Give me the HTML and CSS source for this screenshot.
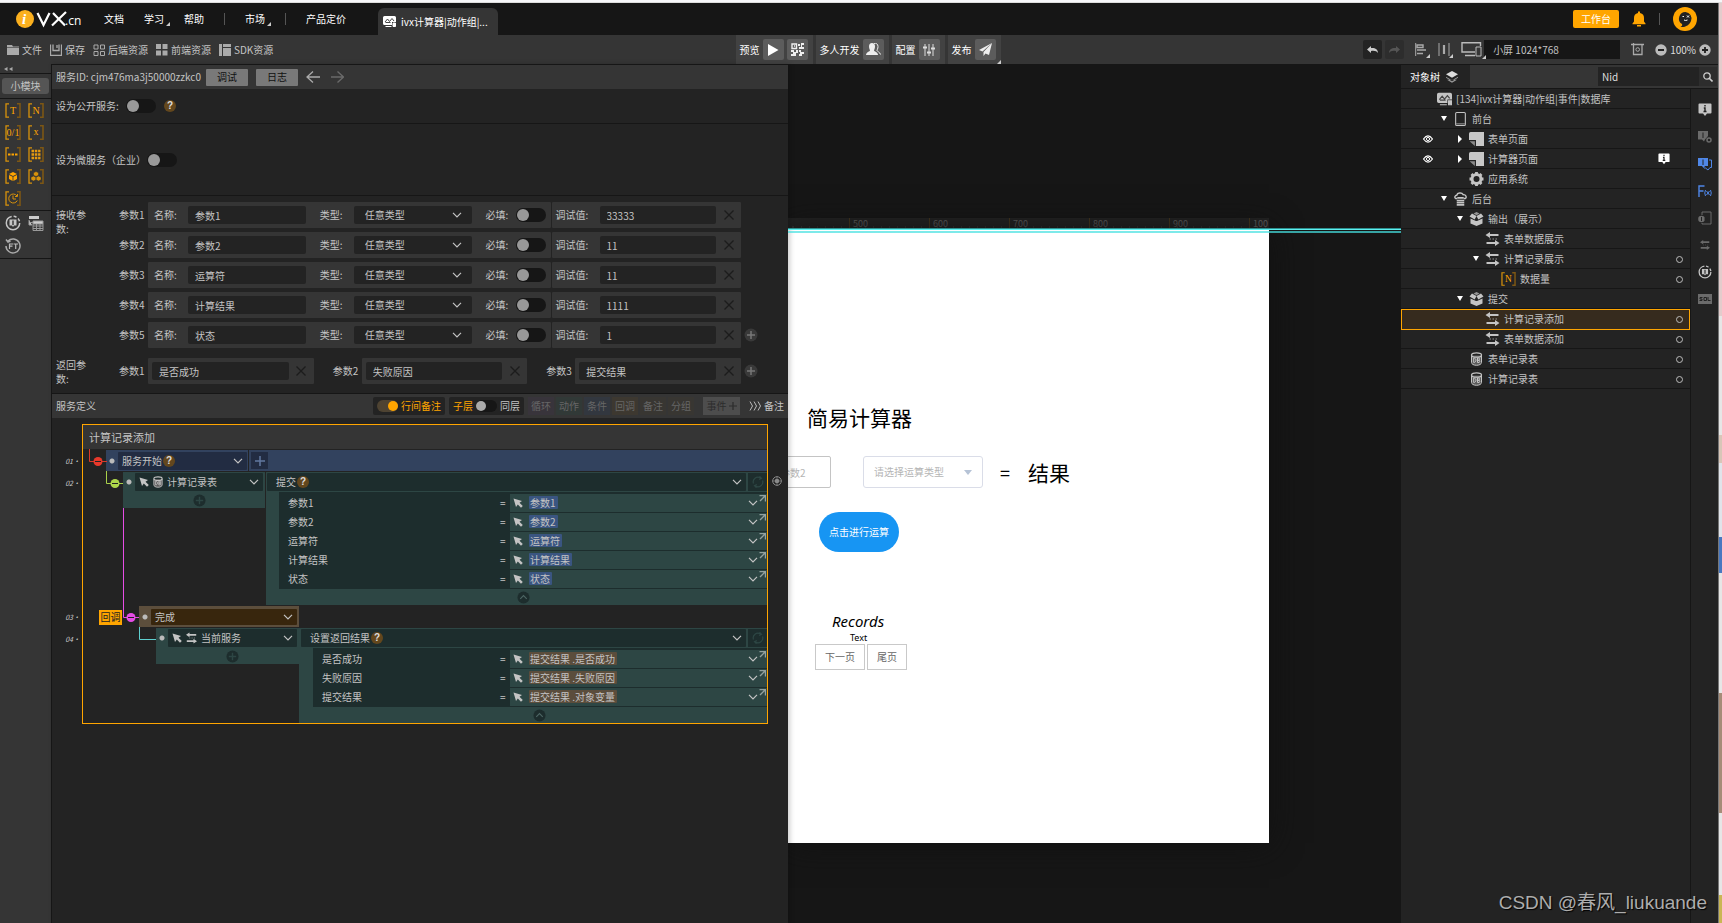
FILE: index.html
```html
<!DOCTYPE html>
<html lang="zh-CN">
<head>
<meta charset="utf-8">
<title>iVX</title>
<link rel="stylesheet" href="styles.css">
</head>
<body>
<svg class="defs" aria-hidden="true">
  <symbol id="chev" viewBox="0 0 10 6"><path d="M1 .8 5 4.8 9 .8" fill="none" stroke="currentColor" stroke-width="1.2"/></symbol>
  <symbol id="x" viewBox="0 0 10 10"><path d="M.5.5 9.500 9.500M9.500.5.5 9.500" fill="none" stroke="currentColor" stroke-width="1.300"/></symbol>
  <symbol id="plus" viewBox="0 0 10 10"><path d="M5 0v10M0 5h10" fill="none" stroke="currentColor" stroke-width="1.500"/></symbol>
  <symbol id="pluscirc" viewBox="0 0 14 14"><circle cx="7" cy="7" r="6.500" fill="var(--disc)"/><path d="M7 3v8M3 7h8" stroke="currentColor" stroke-width="1.500"/></symbol>
  <symbol id="upcirc" viewBox="0 0 14 14"><circle cx="7" cy="7" r="6.500" fill="#1d2d2d"/><path d="M3.500 8.500 7 5l3.500 3.500" fill="none" stroke="#4d6664" stroke-width="1.200"/></symbol>
  <symbol id="cursor" viewBox="0 0 10 10"><path d="M.5.5 9 3 6.500 4.800 9.800 8 8 9.800 4.800 6.500 3 9z" fill="currentColor"/></symbol>
  <symbol id="corner" viewBox="0 0 7 7"><path d="M.5.5h6v6M6 1 1 6" fill="none" stroke="#93a19f" stroke-width="1.400"/></symbol>
  <symbol id="refresh" viewBox="0 0 12 12"><path d="M1.500 7.500A4.700 4.700 0 0 1 8.500 2M10.500 4.500A4.700 4.700 0 0 1 3.500 10M7.500.3l2 2-2.300 1.200M4.500 11.700l-2-2 2.300-1.200" fill="none" stroke="currentColor" stroke-width="1.200"/></symbol>
  <symbol id="swap" viewBox="0 0 14 14"><path d="M13 3H3M1 11h10" stroke="currentColor" stroke-width="2.200"/><path d="M0 3 4.500 0v6zM14 11 9.500 8v6z" fill="currentColor"/><path d="M4 7h1.500M7 7h1.500M10 7h1.500" stroke="currentColor" opacity=".7"/></symbol>
  <symbol id="db" viewBox="0 0 12 14"><path d="M1 3.500v7C1 12 3 13.300 6 13.300S11 12 11 10.500v-7" fill="#5d5d5d" stroke="currentColor"/><ellipse cx="6" cy="3" rx="5" ry="2.200" fill="none" stroke="currentColor" stroke-width="1.300"/><path d="M3.200 6v4.500c3 0 3-4.500 0-4.500M7 6v4.500h1.500c1 0 1-2.200 0-2.200H7.200 8.500C9.300 8.300 9.300 6 8.300 6z" fill="none" stroke="currentColor"/></symbol>
  <symbol id="box" viewBox="0 0 14 14"><path d="M1 6.500V11.500L7 14l6-2.500V6.500L7.500 9h-1z" fill="currentColor"/><path d="m7 4 4.500-2.500L14 4.500 8.800 7.500zM7 4 2.500 1.500 0 4.500l5.200 3z" fill="currentColor"/><path d="M4 1.500 7 0l3 1.500L7 3.200z" fill="currentColor" opacity=".7"/></symbol>
  <symbol id="page" viewBox="0 0 14 13"><path d="M1.500 0H14v13H6.500V7.500H0v-6Q0 0 1.500 0z" fill="#c8c8c8"/><path d="M.5 8.500H5.500V13z" fill="#8b8b8b"/></symbol>
  <symbol id="gear" viewBox="0 0 14 14"><circle cx="7" cy="7" r="4.500" fill="none" stroke="currentColor" stroke-width="3"/><path d="M7 0v2.500M7 11.500V14M0 7h2.500M11.500 7H14M2 2l2 2M10 10l2 2M12 2l-2 2M4 10l-2 2" stroke="currentColor" stroke-width="2.800"/></symbol>
  <symbol id="tablet" viewBox="0 0 10 13"><rect x=".5" y=".5" width="9" height="12" rx="1" fill="none" stroke="currentColor"/><path d="M1 11h8" stroke="currentColor" opacity=".7"/></symbol>
  <symbol id="cloud" viewBox="0 0 12 13"><path d="M3 6H1.500C0 5 1 3 2.500 3 3 .8 7 0 8.500 2.500c2.500-.3 3.500 2.500 2 3.500H9" fill="none" stroke="currentColor" stroke-width="1.300"/><path d="M3 5.500h6M2.500 8h7M2.500 10h7M2.500 12h7" stroke="currentColor" stroke-width="1.500"/></symbol>
  <symbol id="app" viewBox="0 0 13 11"><path d="M1.500 0h10Q13 0 13 1.500V6H9v3H1.500Q0 9 0 7.500v-6Q0 0 1.500 0z" fill="currentColor"/><path d="M2 6 4.500 3 6.500 5.500 9 2.500l2 2.500M2.500 6.500h5" fill="none" stroke="#444"/><path d="M10 7h2.500v3.500H10zM2.500 10.500h6" fill="currentColor" stroke="currentColor"/></symbol>
  <symbol id="note" viewBox="0 0 14 14"><path d="M1.500.5h11q1 0 1 1v8q0 1-1 1H9L7 13l-2-2.500H1.500q-1 0-1-1v-8q0-1 1-1z" fill="currentColor"/><path d="M7 2v1.500M5.800 5H7v3.500M5.500 8.500h3" stroke="#222" stroke-width="1.400" fill="none"/></symbol>
  <symbol id="service" viewBox="0 0 16 16"><circle cx="8" cy="8" r="6.700" fill="none" stroke="currentColor" stroke-width="1.500" stroke-dasharray="30 2 3 2 3 2"/><path d="M4.500 4.500h7v6H9L8 12l-1-1.500H4.500z" fill="currentColor"/><path d="M8 5.500V10" stroke="#333" stroke-width="1.400"/></symbol>
  <symbol id="eye" viewBox="0 0 10 8"><path d="M.5 4Q5-2.300 9.500 4 5 10.300.5 4z" fill="none" stroke="#fff" stroke-width="1.200"/><circle cx="5" cy="4" r="1.600" fill="none" stroke="#fff"/></symbol>
  <symbol id="brk" viewBox="0 0 16 15"><path d="M4 .8H1v13.400h3" fill="none" stroke="#d8920b" stroke-width="1.300"/><path d="M12 .8h3v13.400h-3" fill="none" stroke="#7d5714" stroke-width="1.600"/></symbol>
</svg>

<div class="browser-edge"></div>
<div class="app">
<div class="workspace">
  <header class="top">
    <svg class="logo" viewBox="0 0 68 20" role="img" aria-label="iVX.cn">
      <circle cx="9" cy="10" r="9" fill="#fbb01e"/>
      <text x="6" y="15" class="logo-i">i</text>
      <path d="m21.500 4 6 12 6-12M37 4l12 12.500M50 3 36 16.500" fill="none" stroke="#fff" stroke-width="2.200"/>
      <text x="49" y="16" class="logo-cn">.cn</text>
    </svg>
    <nav class="menu">
      <a href="#">文档</a>
      <a href="#" class="drop">学习</a>
      <a href="#">帮助</a>
      <i class="sep"></i>
      <a href="#" class="drop">市场</a>
      <i class="sep"></i>
      <a href="#">产品定价</a>
    </nav>
    <a href="#" class="tab"><svg width="13" height="11"><use href="#app"/></svg>ivx计算器|动作组|...</a>
    <div class="account">
      <button class="workbench">工作台</button>
      <svg width="14" height="16" viewBox="0 0 14 16"><path d="M6 .5h2V2c3 .5 4 2.500 4 5v3.500l1.500 2v.8H.5v-.8l1.500-2V7c0-2.500 1-4.500 4-5zM5 14h4v1.500H5z" fill="#ffa500"/></svg>
      <i class="sep"></i>
      <svg width="24" height="24" viewBox="0 0 24 24"><circle cx="12" cy="12" r="12" fill="#ffa500"/><path d="M12.500 5a6.500 6.500 0 0 1 5.500 9c-1.500 4-5.500 6.500-10.500 6 1.500-.8 2-1.800 1.500-3A6.500 6.500 0 0 1 12.500 5z" fill="#222"/><path d="M9.500 9.500h1.500M14 8.500l2 2M16 8.500l-2 2M11 13q1.500 1 3.500 0" stroke="#fff" fill="none"/></svg>
    </div>
  </header>

  <div class="toolbar">
    <div class="files">
      <button class="plain"><svg width="12" height="10" viewBox="0 0 12 10"><path d="M0 0h5l1 1.500h6V10H0z" fill="#aaa"/><path d="M0 2.500h12" stroke="#666"/></svg>文件</button>
      <button class="plain"><svg width="12" height="12" viewBox="0 0 12 12"><path d="M.5.5v11h11V.5M3 .5v6h6v-6M7 1v3" fill="none" stroke="#aaa" stroke-width="1.300"/></svg>保存</button>
      <button class="plain"><svg width="12" height="12" viewBox="0 0 12 12"><path d="M1 1h4v4H1zM7.500 1h4v4h-4zM1 7.500h4v4H1zM7.500 7.500h4v4h-4z" fill="none" stroke="#aaa"/></svg>后端资源</button>
      <button class="plain"><svg width="12" height="12" viewBox="0 0 12 12"><path d="M0 0h5v5H0zM6.500 0h5v5h-5zM0 6.500h5v5H0zM6.500 6.500h5v5h-5z" fill="#aaa"/></svg>前端资源</button>
      <button class="plain"><svg width="12" height="12" viewBox="0 0 12 12"><path d="M0 0h3v12H0zM4 0h8v3H4zM4 4h8v8H4z" fill="#aaa"/></svg>SDK资源</button>
    </div>
    <div class="run">
      <div class="rungroup">预览
        <button aria-label="运行"><svg width="12" height="12" viewBox="0 0 12 12"><path d="M1 0v12l10.500-6z" fill="#fff"/></svg></button>
        <button aria-label="二维码"><svg width="13" height="13" viewBox="0 0 13 13"><path d="M1 1h4.500v4.500H1zM3 3h1" fill="none" stroke="#eee" stroke-width="1.400"/><path d="M7 1h2v2H7zM10 0h3v2h-2v2h2v2H8V4h2zM0 7h3v2h2V7h2v3H5v3H0v-2h2V9H0zM8 7h2v2h3v2h-2v2H8v-2h1V9H8z" fill="#eee"/></svg></button></div>
      <div class="rungroup">多人开发
        <button aria-label="多人开发"><svg width="15" height="13" viewBox="0 0 15 13"><path d="M6 0c2 0 3 1.500 3 3.500S8 7 8 7.500c0 1 4 1.500 4 4.500H0C0 9 4 8.500 4 7.500 4 7 3 5.500 3 3.500S4 0 6 0z" fill="#eee"/><path d="M8 .5c2-.8 4 .5 4 3s-1 3-1 4 3 1.500 3.500 4" fill="none" stroke="#eee"/></svg></button></div>
      <div class="rungroup">配置
        <button aria-label="配置"><svg width="12" height="12" viewBox="0 0 12 12"><path d="M2 0v12M6 0v12M10 0v12" stroke="#ddd"/><path d="M0 3.500h4M4 8.500h4M8 4.500h4" stroke="#ddd" stroke-width="2"/></svg></button></div>
      <div class="rungroup drop">发布
        <button aria-label="发布"><svg width="13" height="13" viewBox="0 0 13 13"><path d="M13 0 0 7l3.500 1.500zM13 0 4.500 9v4l2-2.500L10 12z" fill="#eee"/></svg></button></div>
    </div>
    <div class="view">
      <button class="dark" aria-label="撤销"><svg width="11" height="8" viewBox="0 0 11 8"><path d="M0 3.500 4 0v2c4-.5 7 1.500 7 5-1.500-2-3.500-2.500-7-2v2z" fill="#ccc"/></svg></button>
      <button class="dark" aria-label="重做"><svg width="11" height="8" viewBox="0 0 11 8"><path d="M11 3.500 7 0v2C3 1.500 0 3.500 0 7c1.500-2 3.500-2.500 7-2v2z" fill="#555"/></svg></button>
      <button class="plain drop" aria-label="对齐"><svg width="12" height="13" viewBox="0 0 12 13"><path d="M.7 0v13" stroke="#aaa"/><path d="M2 2h6v2.500H2zM2 7h9M2 10.500h6" fill="none" stroke="#aaa" stroke-width="1.400"/></svg></button>
      <button class="plain drop" aria-label="分布"><svg width="12" height="13" viewBox="0 0 12 13"><path d="M1 0v13M11 0v13" stroke="#aaa"/><path d="M6 2v9" stroke="#aaa" stroke-width="2.200"/></svg></button>
      <div class="device">
        <label for="screen" class="drop"><svg width="22" height="15" viewBox="0 0 22 15"><path d="M14 10H1V.7h18.500V4M4 13.500h10" fill="none" stroke="#bbb" stroke-width="1.400"/><path d="M15 5h5v9h-5z" fill="none" stroke="#bbb"/></svg></label>
        <select id="screen"><option>小屏 1024*768</option></select>
      </div>
      <svg width="13" height="13" viewBox="0 0 13 13"><path d="M0 1.500h13M2.500 0v11.500h8.500V2" fill="none" stroke="#aaa" stroke-width="1.300"/><circle cx="6.700" cy="6.500" r="1.800" fill="none" stroke="#aaa"/></svg>
      <div class="zoom">
        <button class="plain" aria-label="缩小"><svg width="12" height="12" viewBox="0 0 12 12"><circle cx="6" cy="6" r="5.700" fill="#bbb"/><path d="M3 6h6" stroke="#222" stroke-width="2"/></svg></button>
        <span>100%</span>
        <button class="plain" aria-label="放大"><svg width="12" height="12" viewBox="0 0 12 12"><circle cx="6" cy="6" r="5.700" fill="#bbb"/><path d="M3 6h6M6 3v6" stroke="#222" stroke-width="1.800"/></svg></button>
      </div>
    </div>
  </div>

  <main class="main">
    <aside class="palette">
      <div class="collapse"><svg width="9" height="4" viewBox="0 0 9 4"><path d="M3.500 0v4L0 2zM8.500 0v4L5 2z" fill="#aaa"/></svg></div>
      <div class="mod"><button>小模块</button></div>
      <div class="vars">
        <svg viewBox="0 0 16 15"><use href="#brk"/><text x="8" y="11">T</text></svg>
        <svg viewBox="0 0 16 15"><use href="#brk"/><text x="8" y="11">N</text></svg>
        <svg viewBox="0 0 16 15"><use href="#brk"/><text x="8" y="11">0/1</text></svg>
        <svg viewBox="0 0 16 15"><use href="#brk"/><text x="8" y="10">x</text></svg>
        <svg viewBox="0 0 16 15"><use href="#brk"/><path d="M3 7.500h10" stroke="#ffa500" stroke-width="2" stroke-dasharray="2.500 1"/></svg>
        <svg viewBox="0 0 16 15"><use href="#brk"/><path d="M3.500 4h9M3.500 7.500h9M3.500 11h9" stroke="#e59a10" stroke-width="2.500" stroke-dasharray="2.500 .8"/></svg>
        <svg viewBox="0 0 16 15"><use href="#brk"/><path d="M8 3 4 5l4 2 4-2zM4 6l3.600 1.800V12L4 10zM12 6 8.400 7.800V12L12 10z" fill="#ffa500"/></svg>
        <svg viewBox="0 0 16 15"><use href="#brk"/><path d="m8 2.500 2.500 1.200v2.600L8 7.500 5.500 6.300V3.700zM5.500 7 8 8.200v2.600L5.500 12 3 10.800V8.200zM10.500 7 13 8.200v2.600L10.500 12 8 10.800V8.200z" fill="#d8920b" stroke="#333" stroke-width=".5"/></svg>
        <svg viewBox="0 0 16 15"><use href="#brk"/><path d="M12 5a4.500 4.500 0 1 0 .3 4.500M8 4.500V8h3M12.500 3v2.500H10" fill="none" stroke="#d8920b"/></svg>
      </div>
      <div class="services">
        <svg viewBox="0 0 16 16"><use href="#service"/></svg>
        <svg viewBox="0 0 16 16"><path d="M1 1h10v3H1z" fill="#ccc"/><path d="M1 5v5h3M2 7.500h3M5 6h10v3H5z" fill="#ccc" stroke="#999"/><path d="M5 11h10M5 13.500h10M5 9v6.500M8.500 9v6.500M12 9v6.500M15 9v6.500M5 15.500h10" stroke="#999"/></svg>
        <svg viewBox="0 0 16 16"><path d="M3 3a7 7 0 1 1-2 5M1 1.500 3 4l2.500-1" fill="none" stroke="#aaa" stroke-width="1.500"/><path d="M4.500 11V6H8M4.500 8.200h3M8.500 6H13M10.700 6v5" fill="none" stroke="#bbb" stroke-width="1.200"/></svg>
      </div>
    </aside>

    <section class="panel">
      <div class="idbar"><span class="sid">服务ID:&nbsp;cjm476ma3j50000zzkc0</span>
        <button class="grey">调试</button><button class="grey">日志</button>
        <svg class="arrows" width="38" height="12" viewBox="0 0 38 12"><path d="M14 6H1M7 .5 1 6l6 5.500" fill="none" stroke="#aaa" stroke-width="1.300"/><path d="M25 6h12M31.500.5l6 5.500-6 5.500" fill="none" stroke="#6a6a6a" stroke-width="1.300"/></svg>
      </div>
      <div class="publicrow"><label for="pub">设为公开服务:</label><input type="checkbox" class="toggle" id="pub"><span class="help">?</span></div>
      <div class="microrow"><label for="mic">设为微服务（企业）</label><input type="checkbox" class="toggle" id="mic"></div>

      <div class="params">
        <div class="caption">接收参数:</div>
        <div class="rows">
          <div class="param"><span class="pname">参数1</span>
            <div class="grp"><label for="n1">名称:</label><input id="n1" value="参数1"><label for="t1" class="gapl">类型:</label><span class="sel"><select id="t1"><option>任意类型</option></select><svg><use href="#chev"/></svg></span><label for="r1" class="gapl req">必填:</label><input type="checkbox" class="toggle" id="r1"></div>
            <div class="grp dbg"><label for="d1">调试值:</label><input id="d1" value="33333"><button class="del" aria-label="删除"><svg><use href="#x"/></svg></button></div><span class="addslot"></span></div>
          <div class="param"><span class="pname">参数2</span>
            <div class="grp"><label for="n2">名称:</label><input id="n2" value="参数2"><label for="t2" class="gapl">类型:</label><span class="sel"><select id="t2"><option>任意类型</option></select><svg><use href="#chev"/></svg></span><label for="r2" class="gapl req">必填:</label><input type="checkbox" class="toggle" id="r2"></div>
            <div class="grp dbg"><label for="d2">调试值:</label><input id="d2" value="11"><button class="del" aria-label="删除"><svg><use href="#x"/></svg></button></div><span class="addslot"></span></div>
          <div class="param"><span class="pname">参数3</span>
            <div class="grp"><label for="n3">名称:</label><input id="n3" value="运算符"><label for="t3" class="gapl">类型:</label><span class="sel"><select id="t3"><option>任意类型</option></select><svg><use href="#chev"/></svg></span><label for="r3" class="gapl req">必填:</label><input type="checkbox" class="toggle" id="r3"></div>
            <div class="grp dbg"><label for="d3">调试值:</label><input id="d3" value="11"><button class="del" aria-label="删除"><svg><use href="#x"/></svg></button></div><span class="addslot"></span></div>
          <div class="param"><span class="pname">参数4</span>
            <div class="grp"><label for="n4">名称:</label><input id="n4" value="计算结果"><label for="t4" class="gapl">类型:</label><span class="sel"><select id="t4"><option>任意类型</option></select><svg><use href="#chev"/></svg></span><label for="r4" class="gapl req">必填:</label><input type="checkbox" class="toggle" id="r4"></div>
            <div class="grp dbg"><label for="d4">调试值:</label><input id="d4" value="1111"><button class="del" aria-label="删除"><svg><use href="#x"/></svg></button></div><span class="addslot"></span></div>
          <div class="param"><span class="pname">参数5</span>
            <div class="grp"><label for="n5">名称:</label><input id="n5" value="状态"><label for="t5" class="gapl">类型:</label><span class="sel"><select id="t5"><option>任意类型</option></select><svg><use href="#chev"/></svg></span><label for="r5" class="gapl req">必填:</label><input type="checkbox" class="toggle" id="r5"></div>
            <div class="grp dbg"><label for="d5">调试值:</label><input id="d5" value="1"><button class="del" aria-label="删除"><svg><use href="#x"/></svg></button></div><button class="addslot" aria-label="添加参数"><svg><use href="#pluscirc"/></svg></button></div>
        </div>
      </div>
      <div class="returns">
        <div class="caption">返回参数:</div>
        <div class="retrow">
          <label for="o1">参数1</label><div class="grp ret"><input id="o1" value="是否成功"><button class="del" aria-label="删除"><svg><use href="#x"/></svg></button></div>
          <label for="o2">参数2</label><div class="grp ret"><input id="o2" value="失败原因"><button class="del" aria-label="删除"><svg><use href="#x"/></svg></button></div>
          <label for="o3">参数3</label><div class="grp ret"><input id="o3" value="提交结果"><button class="del" aria-label="删除"><svg><use href="#x"/></svg></button></div>
          <button class="addslot" aria-label="添加返回参数"><svg><use href="#pluscirc"/></svg></button>
        </div>
      </div>

      <div class="defbar"><span class="deftitle">服务定义</span>
        <label class="chip on"><input type="checkbox" class="mini" checked>行间备注</label>
        <label class="chip"><span class="on">子层</span><input type="checkbox" class="mini">同层</label>
        <div class="kinds"><button class="k1">循环</button><button class="k2">动作</button><button class="k3">条件</button><button class="k4">回调</button><button class="k5">备注</button><button class="k5">分组</button></div>
        <button class="event">事件<svg width="8" height="8"><use href="#plus"/></svg></button>
        <button class="plain remark"><svg width="12" height="10" viewBox="0 0 12 10"><path d="m1 .5 2.500 4.500L1 9.500M5 .5 7.500 5 5 9.500M9 .5 11.500 5 9 9.500" fill="none" stroke="#bbb"/></svg>备注</button>
      </div>

      <div class="flowarea">
        <div class="flow">
          <h2>计算记录添加</h2>
          <div class="step start"><span class="ln">01·</span>
            <div class="node"><i class="dot"></i><button class="pick">服务开始<span class="help">?</span><svg class="chev"><use href="#chev"/></svg></button></div>
            <div class="rest"><button class="sq" aria-label="添加"><svg width="10" height="10"><use href="#plus"/></svg></button></div>
          </div>
          <div class="step act"><span class="ln">02·</span>
            <div class="node"><div class="noderow"><i class="dot"></i><button class="pick"><svg class="cur"><use href="#cursor"/></svg><svg width="10" height="12"><use href="#db"/></svg>计算记录表<svg class="chev"><use href="#chev"/></svg></button></div>
              <button class="more" aria-label="添加"><svg><use href="#pluscirc"/></svg></button></div>
            <div class="call"><div class="callhead"><button class="pick">提交<span class="help">?</span><svg class="chev"><use href="#chev"/></svg></button><button class="sync" aria-label="刷新"><svg width="12" height="12"><use href="#refresh"/></svg></button></div>
              <div class="args">
                <div class="arg"><span>参数1</span><b>=</b><div class="val"><svg class="cur"><use href="#cursor"/></svg><em>参数1</em><svg class="chev"><use href="#chev"/></svg><svg class="cnr"><use href="#corner"/></svg></div></div>
                <div class="arg"><span>参数2</span><b>=</b><div class="val"><svg class="cur"><use href="#cursor"/></svg><em>参数2</em><svg class="chev"><use href="#chev"/></svg><svg class="cnr"><use href="#corner"/></svg></div></div>
                <div class="arg"><span>运算符</span><b>=</b><div class="val"><svg class="cur"><use href="#cursor"/></svg><em>运算符</em><svg class="chev"><use href="#chev"/></svg><svg class="cnr"><use href="#corner"/></svg></div></div>
                <div class="arg"><span>计算结果</span><b>=</b><div class="val"><svg class="cur"><use href="#cursor"/></svg><em>计算结果</em><svg class="chev"><use href="#chev"/></svg><svg class="cnr"><use href="#corner"/></svg></div></div>
                <div class="arg"><span>状态</span><b>=</b><div class="val"><svg class="cur"><use href="#cursor"/></svg><em>状态</em><svg class="chev"><use href="#chev"/></svg><svg class="cnr"><use href="#corner"/></svg></div></div>
              </div>
              <button class="fold" aria-label="收起"><svg><use href="#upcirc"/></svg></button></div>
          </div>
          <div class="step back"><span class="ln">03·</span><span class="badge">回调</span>
            <div class="node"><i class="dot"></i><button class="pick">完成<svg class="chev"><use href="#chev"/></svg></button></div>
          </div>
          <div class="step act deep"><span class="ln">04·</span>
            <div class="node"><div class="noderow"><i class="dot"></i><button class="pick"><svg class="cur"><use href="#cursor"/></svg><svg width="11" height="12"><use href="#swap"/></svg>当前服务<svg class="chev"><use href="#chev"/></svg></button></div>
              <button class="more" aria-label="添加"><svg><use href="#pluscirc"/></svg></button></div>
            <div class="call"><div class="callhead"><button class="pick">设置返回结果<span class="help">?</span><svg class="chev"><use href="#chev"/></svg></button><button class="sync" aria-label="刷新"><svg width="12" height="12"><use href="#refresh"/></svg></button></div>
              <div class="args brown">
                <div class="arg"><span>是否成功</span><b>=</b><div class="val"><svg class="cur"><use href="#cursor"/></svg><em>提交结果 .是否成功</em><svg class="chev"><use href="#chev"/></svg><svg class="cnr"><use href="#corner"/></svg></div></div>
                <div class="arg"><span>失败原因</span><b>=</b><div class="val"><svg class="cur"><use href="#cursor"/></svg><em>提交结果 .失败原因</em><svg class="chev"><use href="#chev"/></svg><svg class="cnr"><use href="#corner"/></svg></div></div>
                <div class="arg"><span>提交结果</span><b>=</b><div class="val"><svg class="cur"><use href="#cursor"/></svg><em>提交结果 .对象变量</em><svg class="chev"><use href="#chev"/></svg><svg class="cnr"><use href="#corner"/></svg></div></div>
              </div>
              <button class="fold" aria-label="收起"><svg><use href="#upcirc"/></svg></button></div>
          </div>
          <svg class="wires" width="80" height="230" viewBox="0 0 80 230">
            <g fill="none"><path d="M6.500 24v12.500H24" stroke="#d93a2b"/><path d="M23.500 46v12.500H40" stroke="#a9d14a"/><path d="M40.500 83v109.500H56" stroke="#e64ce6"/><path d="M56.500 202v12.500H73" stroke="#5fd0d0"/></g>
            <circle cx="15" cy="36.500" r="4.500" fill="#e8392b"/><circle cx="32" cy="58.500" r="4.500" fill="#aed84b"/><circle cx="48" cy="192.500" r="4.500" fill="#e64ce6"/>
            <path d="M12 36.500h6M29 58.500h6M45 192.500h6" stroke="#222"/>
          </svg>
        </div>
        <svg class="target" width="10" height="10" viewBox="0 0 10 10"><circle cx="5" cy="5" r="4.300" fill="none" stroke="#8a8a8a"/><circle cx="5" cy="5" r="2.300" fill="#8a8a8a"/><path d="M5 0v10M0 5h10" stroke="#8a8a8a" stroke-width=".6"/></svg>
      </div>
    </section>

    <section class="canvas">
      <div class="ruler"><i></i><span>500</span><span>600</span><span>700</span><span>800</span><span>900</span><span class="last">100</span></div>
      <div class="guide"></div>
      <div class="sheet">
        <h1 class="c-title">简易计算器</h1>
        <input class="c-num" placeholder="参数2" aria-label="参数2">
        <div class="c-type"><select aria-label="请选择运算类型"><option>请选择运算类型</option></select><svg width="8" height="5" viewBox="0 0 8 5"><path d="M0 0h8L4 5z" fill="#b6c3d6"/></svg></div>
        <span class="c-eq">=</span><span class="c-res">结果</span>
        <button class="c-go">点击进行运算</button>
        <div class="c-rec">Records</div><div class="c-text">Text</div>
        <div class="c-pager"><button>下一页</button><button>尾页</button></div>
      </div>
    </section>

    <aside class="side">
      <div class="sidehead"><button class="treetab">对象树<svg width="12" height="12" viewBox="0 0 12 12"><path d="m6 0 6 3.300-6 3.400L0 3.300z" fill="#ddd"/><path d="m0 5.800 6 3.400 6-3.400v1l-6 3.400L0 6.800zM1 8.800 6 11.800l5-3" fill="#999"/></svg></button>
        <div class="search"><input aria-label="搜索" value="Nid"><button aria-label="搜索"><svg width="10" height="10" viewBox="0 0 10 10"><circle cx="4" cy="4" r="3.200" fill="none" stroke="#ccc" stroke-width="1.300"/><path d="m6.500 6.500 3 3" stroke="#ccc" stroke-width="1.600"/></svg></button></div></div>
      <div class="sidebody">
        <ul class="tree">
          <li class="root"><svg><use href="#app"/></svg>[134]ivx计算器|动作组|事件|数据库</li>
          <li class="l1 open"><svg><use href="#tablet"/></svg>前台</li>
          <li class="l2 shut"><svg><use href="#page"/></svg>表单页面<svg class="eye"><use href="#eye"/></svg></li>
          <li class="l2 shut"><svg><use href="#page"/></svg>计算器页面<svg class="eye"><use href="#eye"/></svg><svg class="flag"><use href="#note"/></svg></li>
          <li class="l2"><svg><use href="#gear"/></svg>应用系统</li>
          <li class="l1 open"><svg><use href="#cloud"/></svg>后台</li>
          <li class="l2 open"><svg><use href="#box"/></svg>输出（展示）</li>
          <li class="l3"><svg><use href="#swap"/></svg>表单数据展示</li>
          <li class="l3 open ring"><svg><use href="#swap"/></svg>计算记录展示</li>
          <li class="l4 ring"><svg viewBox="0 0 16 15"><use href="#brk"/><text x="8" y="11">N</text></svg>数据量</li>
          <li class="l2 open"><svg><use href="#box"/></svg>提交</li>
          <li class="l3 ring picked"><svg><use href="#swap"/></svg>计算记录添加</li>
          <li class="l3 ring"><svg><use href="#swap"/></svg>表单数据添加</li>
          <li class="l2 ring"><svg><use href="#db"/></svg>表单记录表</li>
          <li class="l2 ring"><svg><use href="#db"/></svg>计算记录表</li>
        </ul>
        <nav class="rail">
          <svg><use href="#note"/></svg>
          <svg class="dim" viewBox="0 0 14 14"><path d="M0 1h10v5L7 9.500l-1 2-2-2H0z" fill="currentColor"/><path d="M5 2.500V8" stroke="#222"/><circle cx="11" cy="10" r="2" fill="none" stroke="currentColor" stroke-width="1.500"/></svg>
          <svg class="blue" viewBox="0 0 14 14"><path d="M0 1h10v8H7l-1.500 2L4 9H0z" fill="currentColor"/><path d="M5 2.500V8" stroke="#222"/><path d="M11 3h2.500v7.500H12l-2 2.500-2.500-2H6" fill="none" stroke="currentColor"/></svg>
          <svg class="blue" viewBox="0 0 14 14"><path d="M1 13V2h5.500M1 7h4.500" fill="none" stroke="currentColor" stroke-width="1.400"/><path d="M7.500 6Q6 9 7.500 12M12.500 6q1.500 3 0 6M8.500 7l3 4M11.500 7l-3 4" fill="none" stroke="currentColor"/></svg>
          <svg class="dim" viewBox="0 0 14 14"><path d="M4 4V1h9v12H4v-1" fill="none" stroke="currentColor"/><circle cx="3.500" cy="8" r="3.300" fill="currentColor"/><path d="M3.500 6v4M6.500 8H10" stroke="#222"/></svg>
          <svg class="dim small"><use href="#swap"/></svg>
          <svg><use href="#service"/></svg>
          <svg class="dim" viewBox="0 0 14 14"><path d="M0 2h14v10H0z" fill="currentColor"/><path d="M4.500 5.500H2V7h2v1.500H1.500M6 5.500h2.500v3H6zM10 5v3.500h2.500" fill="none" stroke="#222"/></svg>
        </nav>
      </div>
    </aside>
  </main>
</div>
<div class="desktop"></div>
</div>
<div class="watermark">CSDN @春风_liukuande</div>
</body>
</html>
```
FILE: styles.css
```css
* { box-sizing: border-box; }
html, body { height: 100%; }
body {
  margin: 0; display: flex; flex-direction: column; overflow: hidden;
  background: #161616; color: #c4c4c4;
  font: 10px/14px "Noto Sans CJK SC", "Noto Sans", sans-serif;
}
button, input, select { font: inherit; color: inherit; border: 0; margin: 0; padding: 0; background: none; appearance: none; border-radius: 0; min-width: 0; }
a { color: inherit; text-decoration: none; }
h1, h2 { margin: 0; font-weight: 400; }
svg { flex: none; display: block; }
button { white-space: nowrap; }
.defs { position: absolute; width: 0; height: 0; }
.browser-edge { flex: none; height: 3px; background: #f7f7f9; border-bottom: 1px solid #dcdcdc; }
.app { flex: 1; display: flex; min-height: 0; }
.workspace { flex: 1; min-width: 0; display: flex; flex-direction: column; }
.desktop { width: 4px; border-left: 1px solid #777; background: linear-gradient(#e3cccc 0 34%, #e6e6e6 34% 47%, #d8c6b8 47% 50%, #e0e4ea 50% 58%, #4878c0 58% 62%, #e6e6e6 62% 75%, #a58c78 75% 88%, #e6e6e6 88% 97%, #c9b654 97%); }

/* Header */
.top { flex: none; height: 32px; display: flex; align-items: center; color: #fff; background: #161616; padding: 0 21px 0 16px; }
.logo { width: 68px; height: 20px; }
.logo-i { font: italic bold 15px "Liberation Serif", serif; fill: #fff; }
.logo-cn { font: 12px "Open Sans", sans-serif; fill: #fff; }
.menu { display: flex; align-items: center; margin-left: 20px; gap: 20px; }
.drop { position: relative; }
.drop::after { content: ""; position: absolute; right: -6px; bottom: 0; border: 2px solid; border-color: transparent #ccc #ccc transparent; }
.sep { width: 1px; height: 12px; background: #555; }
.tab { display: flex; align-items: center; gap: 5px; align-self: flex-end; height: 27px; width: 120px; margin-left: 32px; padding: 0 5px; border-radius: 6px 6px 0 0; background: #353535; white-space: nowrap; }
.account { margin-left: auto; display: flex; align-items: center; gap: 13px; }
.workbench { width: 46px; height: 18px; background: #ffa500; border-radius: 2px; }

/* Toolbar */
.toolbar { flex: none; height: 29px; display: grid; grid-template-columns: 1fr auto 1fr; align-items: center; background: #353535; padding: 0 7px 0 25px; }
.files { display: flex; gap: 8px; margin-left: -18px; }
.plain { display: flex; align-items: center; gap: 3px; }
.run { display: flex; gap: 3px; align-self: stretch; color: #fff; }
.rungroup { display: flex; align-items: center; gap: 3px; background: #424242; padding: 0 5px 0 4px; }
.rungroup.drop::after { right: 0; }
.rungroup button { width: 21px; height: 21px; border-radius: 2px; background: #5c5c5c; display: grid; place-items: center; }
.view { display: flex; align-items: center; justify-content: flex-end; gap: 11px; }
.dark { width: 19px; height: 19px; background: #232323; display: grid; place-items: center; border-radius: 2px; }
.dark + .dark { margin-left: -8px; background: #2d2d2d; }
.device { display: flex; align-items: center; gap: 1px; }
.view .drop::after { right: -3px; bottom: -2px; }
.device select { width: 136px; height: 19px; background: #161616; padding-left: 9px; }
.zoom { display: flex; align-items: center; gap: 3px; color: #ddd; }

/* Main */
.main { flex: 1; min-height: 0; display: flex; }
.palette { flex: none; width: 51px; background: #353535; }
.collapse { height: 10px; padding: 3px 4px; border-bottom: 1px solid #161616; }
.mod { height: 25px; padding: 4px 2px; border-bottom: 1px solid #161616; }
.mod button { width: 47px; height: 16px; background: #555; border-radius: 3px; }
.vars, .services { display: grid; grid-template-columns: 16px 16px; column-gap: 7px; row-gap: 7px; padding: 4px 5px; border-bottom: 1px solid #161616; }
.vars svg { width: 16px; height: 15px; }
.vars text, .tree text { font: 10px "Liberation Serif", serif; fill: #ffa500; text-anchor: middle; }
.services svg { width: 16px; height: 16px; }

.panel { flex: none; width: 737px; border-left: 1px solid #161616; background: #232323; display: flex; flex-direction: column; position: relative; z-index: 1; box-shadow: 2px 0 5px rgba(0,0,0,.2); --disc: #393939; }
.idbar { height: 25px; background: #353535; border-top: 1px solid #161616; display: flex; align-items: center; gap: 8px; padding-left: 4px; }
.sid { width: 142px; white-space: nowrap; }
.grey { width: 42px; height: 17px; background: #797979; color: #111; border-radius: 1px; }
.publicrow, .microrow { display: flex; align-items: center; padding-left: 4px; border-bottom: 1px solid #161616; }
.publicrow { height: 35px; gap: 8px; }
.publicrow label { width: 62px; white-space: nowrap; }
.microrow { height: 72px; gap: 1px; }
.microrow label { width: 90px; white-space: nowrap; }
.toggle { flex: none; width: 30px; height: 14px; border-radius: 7px; background: #161616; padding: 1px; }
.toggle::before { content: ""; display: block; width: 12px; height: 12px; border-radius: 50%; background: #999; }
.help { display: inline-block; width: 12px; height: 12px; border-radius: 50%; background: #63471d; color: #ddd; font: bold 10px/12px "Liberation Sans", sans-serif; text-align: center; }
.caption { width: 36px; flex: none; line-height: 14px; }
.params, .returns { display: flex; padding-left: 4px; }
.params { padding-top: 6px; }
.params .caption, .returns .caption { padding-top: 6px; margin-right: 27px; }
.returns .caption { padding-top: 0; }
.rows { flex: 1; display: flex; flex-direction: column; gap: 4px; }
.param, .retrow { display: flex; align-items: center; }
.pname, .retrow label { width: 29px; flex: none; }
.grp { display: flex; align-items: center; height: 26px; flex: 401; background: #353535; padding: 0 5px 0 6px; margin-right: 1px; border-radius: 1px; }
.grp label { flex: none; width: 34px; }
.grp .gapl { margin-left: 14px; }
.grp .req { width: 30px; }
.grp input:not(.toggle) { flex: 1 1 117px; width: 100%; height: 18px; background: #232323; border-radius: 2px; padding: 0 7px; }
.sel { flex: 1 1 117px; min-width: 0; position: relative; }
.sel select { display: block; width: 100%; height: 18px; background: #232323; border-radius: 2px; padding: 0 11px; }
.sel svg { position: absolute; right: 10px; top: 6px; width: 10px; height: 6px; }
.grp.dbg { flex: 190; padding: 0 0 0 4px; margin: 0; }
.grp.dbg label { width: 44px; }
.del { width: 25px; flex: none; display: grid; place-items: center; color: #1c1c1c; }
.del svg { width: 10px; height: 10px; }
.addslot { width: 14px; height: 14px; flex: none; margin: 0 30px 0 3px; color: #777; }
.addslot svg { width: 14px; height: 14px; }
.returns { height: 36px; margin-top: 10px; border-bottom: 1px solid #161616; }
.retrow { flex: 1; align-self: flex-start; }
.grp.ret { flex: 1; padding: 0 0 0 4px; margin-right: 19px; }
.retrow .grp:nth-last-child(2) { margin-right: 0; }

.defbar { height: 24px; flex: none; background: #353535; display: flex; align-items: center; gap: 4px; padding: 0 4px; white-space: nowrap; }
.deftitle { flex: 1; }
.chip { display: flex; align-items: center; gap: 3px; height: 18px; padding: 0 4px; background: #232323; border-radius: 2px; }
.on { color: #ffa500; }
.mini { width: 21px; height: 12px; border-radius: 6px; background: #161616; }
.mini::before { content: ""; display: block; width: 10px; height: 10px; margin: 1px 0; border-radius: 50%; background: #aaa; }
.mini:checked { background: #4e4332; }
.mini:checked::before { background: #ffa500; margin-left: 11px; }
.kinds { display: flex; gap: 2px; color: #666; }
.kinds button { width: 26px; height: 18px; }
.k1 { background: #38343b; } .k2 { background: #313937; } .k3 { background: #32373f; } .k4 { background: #3d3830; } .k5 { background: #383632; }
.event { display: flex; align-items: center; justify-content: center; gap: 2px; width: 37px; height: 18px; margin: 0 5px; background: #4d4d4d; color: #2c2c2c; }

/* Flow editor */
.flowarea { position: relative; padding: 6px 20px 0 30px; }
.flow { position: relative; border: 1px solid #ffa500; --disc: #1d2d2d; display: flex; flex-direction: column; gap: 1px; }
.flow h2 { height: 24px; font-size: 11px; line-height: 24px; padding-left: 6px; background: #353535; }
.step { display: flex; align-items: flex-start; position: relative; }
.ln { position: absolute; right: 100%; top: 4px; font-size: 7px; font-style: italic; color: #ccc; }
.dot { flex: none; width: 12px; height: 6px; background: radial-gradient(circle at 6px, #bbb 0 2px, transparent 3px); }
.pick { flex: 1; height: 18px; display: flex; align-items: center; text-align: left; padding: 0 4px; gap: 4px; border-radius: 1px; background: #1d2d2d; }
.chev { width: 10px; height: 6px; margin-left: auto; }
.cur { width: 10px; height: 10px; }
.pick .help { margin-left: -3px; }
.start { margin-left: 23px; }
.start .ln { right: calc(100% + 26px); }
.start .node { width: 142px; height: 21px; padding-right: 1px; background: #32425e; display: flex; align-items: center; }
.start .pick { background: #222c42; }
.rest { flex: 1; height: 21px; margin-left: 1px; background: #32425e; padding: 2px; }
.sq { width: 17px; height: 17px; background: #222c42; color: #6178a0; display: grid; place-items: center; }
.act { margin-left: 40px; }
.act .ln { right: calc(100% + 43px); }
.act .node { width: 142px; background: #2d4644; margin-right: 1px; }
.noderow { display: flex; align-items: center; padding: 1px 2px 0 0; }
.more, .fold { display: block; width: 100%; height: 17px; color: #2d4644; }
.more { padding-left: 10px; }
.more svg, .fold svg { width: 13px; height: 13px; margin: 1px auto 0; }
.call { flex: 1; background: #2d4644; }
.callhead { display: flex; gap: 2px; padding: 1px 0 1px 1px; }
.callhead .pick { padding-left: 9px; }
.sync { width: 19px; height: 18px; background: #1d2d2d; color: #2d4644; display: grid; place-items: center; }
.args { margin-left: 13px; background: #1d2d2d; padding: 1px 0; }
.arg { display: flex; align-items: center; height: 19px; padding-left: 9px; }
.arg span { flex: 1; }
.arg b { font-weight: 400; width: 10px; }
.val { width: 257px; height: 18px; display: flex; align-items: center; position: relative; background: #2d4644; padding: 0 9px 0 3px; }
.val em { font-style: normal; line-height: 13px; margin-left: 6px; padding: 0 2px 0 1px; background: #3a5581; border-radius: 1px; }
.brown em { background: #5b4d3c; }
.cnr { position: absolute; right: 1px; top: 1px; width: 7px; height: 7px; }
.fold { height: 16px; }
.fold svg { margin: 0 0 0 50%; }
.back { margin-left: 16px; }
.back .ln { right: calc(100% + 19px); }
.badge { width: 23px; height: 15px; margin-top: 4px; margin-right: 17px; background: #ffa500; color: #222; text-align: center; }
.back .node { width: 160px; height: 21px; display: flex; align-items: center; background: #5c4e3c; padding-right: 2px; }
.back .pick { height: 16px; background: #38260d; }
.deep { margin-left: 73px; }
.deep .ln { right: calc(100% + 76px); }
.deep .node { width: 143px; margin: 0; }
.deep .callhead { padding-left: 2px; }
.deep .args { margin-left: 14px; }
.wires { position: absolute; left: 0; top: 0; pointer-events: none; }
.target { position: absolute; right: 6px; top: 58px; }

/* Canvas */
.canvas { flex: 1; min-width: 0; position: relative; overflow: hidden; background: #161616; --sheet: 481px; }
.ruler { position: absolute; left: 0; top: 154px; width: var(--sheet); height: 11px; overflow: hidden; display: flex; background: repeating-linear-gradient(90deg, #343434 0 1px, transparent 1px 8px) 5px 8px / auto 3px repeat-x #232323; color: #666; font-size: 9px; line-height: 11px; }
.ruler i { flex: none; width: 61px; }
.ruler span { flex: none; width: 80px; border-left: 1px solid #49391d; padding-left: 3px; }
.ruler .last { width: 20px; }
.guide { position: absolute; z-index: 1; left: 0; right: 0; top: 164px; height: 5px; background: linear-gradient(#2f8f8f 0 1px, #5cf0f0 1px 2px, transparent 2px 3px, rgba(70,225,225,.7) 3px); }
.sheet { position: absolute; left: 0; top: 165px; width: var(--sheet); height: 614px; background: #fff; color: #000; box-shadow: 0 0 30px #111; }
.sheet > * { position: absolute; white-space: nowrap; }
.c-title, .c-res { font-size: 21px; line-height: 30px; }
.c-title { left: 19px; top: 173px; }
.c-num { left: -77px; top: 227px; width: 120px; height: 32px; border: 1px solid #c4c4c4; border-radius: 2px; padding-left: 68px; }
.c-num::placeholder { color: #b5b5b5; }
.c-type { left: 75px; top: 227px; width: 120px; height: 32px; border: 1px solid #dadde8; border-radius: 3px; display: flex; align-items: center; padding: 0 10px; color: #b5b5b5; }
.c-type select { flex: 1; }
.c-eq { left: 212px; top: 228px; font-size: 18px; line-height: 30px; }
.c-res { left: 240px; top: 228px; }
.c-go { left: 31px; top: 283px; width: 80px; height: 40px; border-radius: 20px; background: #1795f3; color: #fff; }
.c-rec { left: 44px; top: 381px; font: italic 15px/22px "Noto Sans", sans-serif; }
.c-text { left: 62px; top: 402px; font: 9px/14px "Noto Sans", sans-serif; }
.c-pager { left: 27px; top: 415px; display: flex; gap: 2px; }
.c-pager button { height: 26px; padding: 0 9px; border: 1px solid #c9c9c9; color: #666; }

/* Object tree */
.side { flex: none; width: 317px; display: flex; flex-direction: column; background: #232323; }
.sidehead { flex: none; height: 25px; border: solid #161616; border-width: 1px 0; display: flex; justify-content: space-between; background: #353535; }
.treetab { width: 69px; display: flex; align-items: center; gap: 6px; padding-left: 9px; background: #232323; color: #fff; }
.search { display: flex; width: 119px; height: 19px; margin: 2px 1px 0 0; background: #232323; color: #ddd; }
.search input { flex: 1; padding-left: 4px; }
.search button { width: 18px; display: grid; place-items: center; background: #2d2d2d; }
.sidebody { flex: 1; display: flex; }
.tree { flex: 1; margin: 0; padding: 0; list-style: none; }
.tree li { position: relative; height: 20px; border-bottom: 1px solid #161616; display: flex; align-items: center; gap: 4px; --in: 0px; padding-left: calc(36px + var(--in)); }
.tree li > svg:first-child { width: 15px; height: 14px; }
.tree .l1 { --in: 16px; } .tree .l2 { --in: 32px; } .tree .l3 { --in: 48px; } .tree .l4 { --in: 64px; }
.open::before, .shut::before { content: ""; position: absolute; left: calc(24px + var(--in)); top: 7px; border: 3px solid transparent; border-top: 5px solid #fff; }
.shut::before { left: calc(25px + var(--in)); top: 6px; border: 4px solid transparent; border-left: 4px solid #fff; border-right: 0; }
.tree .eye { position: absolute; left: 22px; width: 10px; height: 8px; }
.tree .flag { position: absolute; right: 20px; width: 12px; height: 12px; color: #fff; }
.ring::after { content: ""; position: absolute; right: 7px; top: 7px; width: 5px; height: 5px; border: 1px solid #bbb; border-radius: 50%; }
.tree .picked { outline: 1px solid #ffa500; outline-offset: -1px; background: #362b1e; height: 21px; margin-bottom: -1px; }
.rail { width: 28px; border-left: 1px solid #161616; display: flex; flex-direction: column; align-items: center; gap: 13px; padding-top: 14px; }
.rail svg { width: 14px; height: 14px; }
.rail .small { width: 10px; height: 14px; }
.dim { color: #6b6b6b; }
.blue { color: #4f87e8; }
.watermark { position: absolute; z-index: 2; right: 15px; bottom: 7px; font: 19px/26px "Liberation Sans", "Noto Sans CJK SC", sans-serif; color: #adadad; text-shadow: 1px 1px 1px #000; }
```
